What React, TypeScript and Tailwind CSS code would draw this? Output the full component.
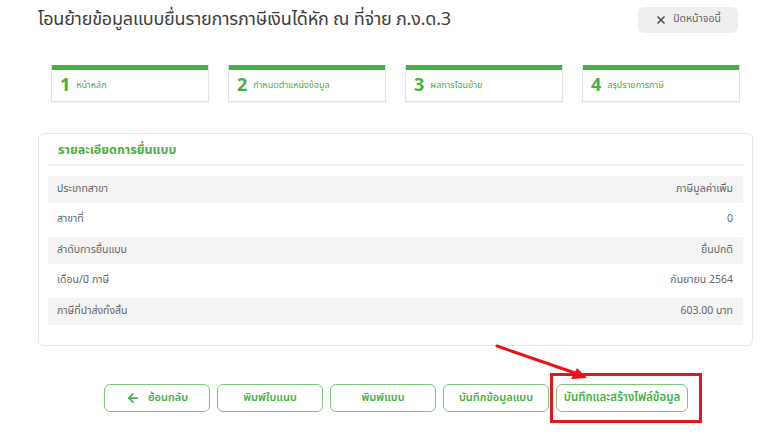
import { ArrowLeft, X } from "lucide-react";

const steps = [
  { no: "1", label: "หน้าหลัก" },
  { no: "2", label: "กำหนดตำแหน่งข้อมูล" },
  { no: "3", label: "ผลการโอนย้าย" },
  { no: "4", label: "สรุปรายการภาษี" },
];

const rows = [
  { label: "ประเภทสาขา", value: "ภาษีมูลค่าเพิ่ม", shaded: true },
  { label: "สาขาที่", value: "0", shaded: false },
  { label: "ลำดับการยื่นแบบ", value: "ยื่นปกติ", shaded: true },
  { label: "เดือน/ปี ภาษี", value: "กันยายน 2564", shaded: false },
  { label: "ภาษีที่นำส่งทั้งสิ้น", value: "603.00 บาท", shaded: true },
];

const buttons = ["พิมพ์ใบแนบ", "พิมพ์แบบ", "บันทึกข้อมูลแบบ"];

export default function App() {
  return (
    <div
      className="relative w-[768px] h-[440px] bg-white overflow-hidden"
      style={{ fontFamily: '"Noto Sans Thai", "Noto Sans", "Liberation Sans", sans-serif' }}
    >
      {/* หัวเรื่อง */}
      <div className="flex items-center justify-between pl-[38px] pr-[30px] pt-[7px]">
        <h1 className="text-[18px] leading-[26px] tracking-[-0.2px] text-[#3d3d3d]">
          โอนย้ายข้อมูลแบบยื่นรายการภาษีเงินได้หัก ณ ที่จ่าย ภ.ง.ด.3
        </h1>
        <button className="w-[100px] h-[26px] rounded-md bg-[#efefef] flex items-center justify-center gap-1.5 text-[10.5px] text-[#666]">
          <X size={12} strokeWidth={3.5} className="text-[#555]" />
          ปิดหน้าจอนี้
        </button>
      </div>

      {/* ขั้นตอน */}
      <div className="flex gap-[19px] pl-[51px] mt-[32px]">
        {steps.map((s) => (
          <div key={s.no} className="w-[158px] h-[37px] border border-[#e3e3e3] border-t-0 bg-white shadow-[0_1px_1px_rgba(0,0,0,0.04)]">
            <div className="h-[5px] bg-[#45b043]" />
            <div className="flex items-center gap-1.5 pl-2 h-[32px]">
              <span className="text-[18px] font-bold text-[#45b043] leading-none">{s.no}</span>
              <span className="text-[9px] text-[#45b043]">{s.label}</span>
            </div>
          </div>
        ))}
      </div>

      {/* รายละเอียด */}
      <div className="ml-[38px] mt-[31px] w-[715px] h-[213px] rounded-md border border-[#e6e6e6] px-[9px] pt-[9px]">
        <div className="h-[23px] pl-[10px] flex items-center text-[12.5px] font-bold text-[#45b043] border-b-2 border-[#efefef] pb-[4px]">
          รายละเอียดการยื่นแบบ
        </div>
        <div className="mt-[10px]">
          {rows.map((r) => (
            <div
              key={r.label}
              className={`flex items-center justify-between pl-[9px] pr-[10px] text-[10.5px] text-[#666] ${
                r.shaded ? "h-[27px] bg-[#f4f4f4]" : "h-[34px] bg-white"
              }`}
            >
              <span>{r.label}</span>
              <span>{r.value}</span>
            </div>
          ))}
        </div>
      </div>

      {/* ปุ่ม */}
      <div className="flex gap-[7px] pl-[104px] mt-[38px]">
        <button className="w-[106px] h-[28px] rounded-md border border-[#7dc57b] flex items-center justify-center gap-2 text-[11px] font-semibold text-[#45b043]">
          <ArrowLeft size={14} strokeWidth={3} />
          ย้อนกลับ
        </button>
        {buttons.map((b) => (
          <button
            key={b}
            className="w-[106px] h-[28px] rounded-md border border-[#7dc57b] flex items-center justify-center text-[11px] font-semibold text-[#45b043]"
          >
            {b}
          </button>
        ))}
        <div className="relative">
          <button className="w-[132px] h-[28px] rounded-md border border-[#7dc57b] flex items-center justify-center text-[11.5px] font-semibold text-[#45b043]">
            บันทึกและสร้างไฟล์ข้อมูล
          </button>
          {/* กรอบแดงเน้น */}
          <div className="absolute left-[-6px] top-[-11px] w-[152px] h-[50px] border-[3px] border-[#e8141b]" />
        </div>
      </div>

      {/* ลูกศรแดง */}
      <svg className="absolute left-0 top-0 pointer-events-none" width="768" height="440">
        <line x1="497" y1="346" x2="578" y2="374" stroke="#e8141b" strokeWidth="3" strokeLinecap="round" />
        <polygon points="587,378 571,379 577,368" fill="#e8141b" />
      </svg>
    </div>
  );
}
